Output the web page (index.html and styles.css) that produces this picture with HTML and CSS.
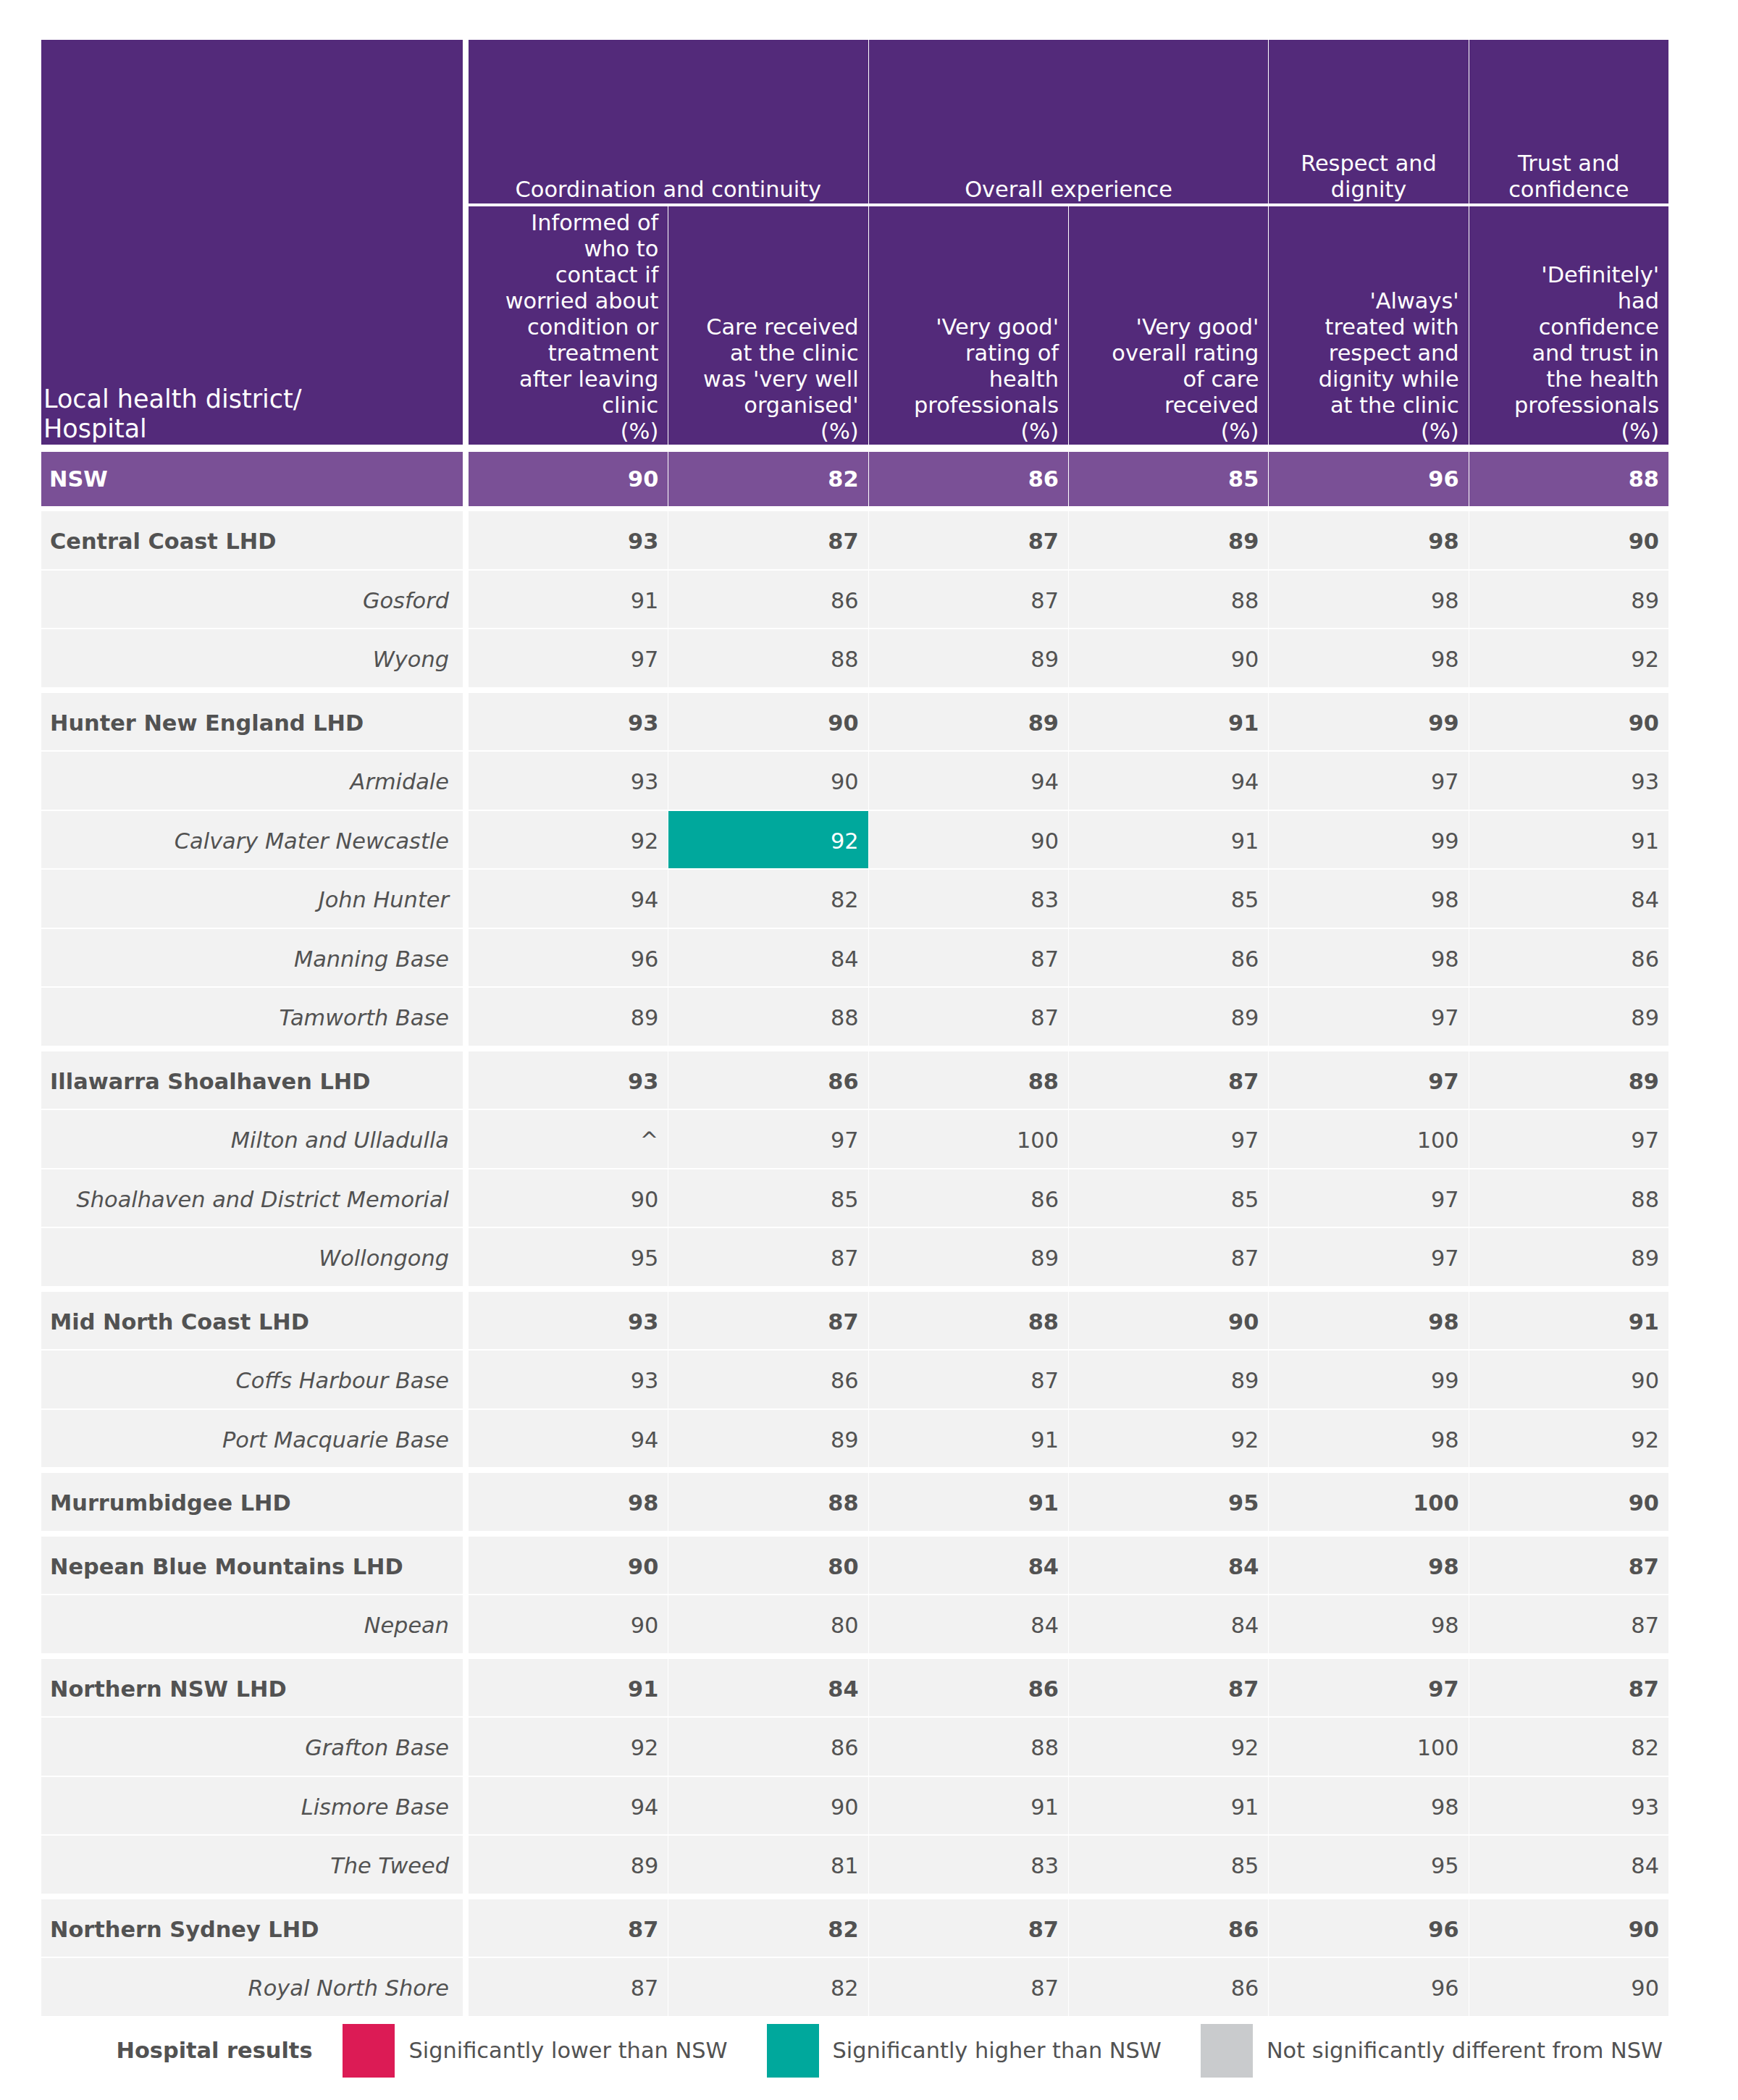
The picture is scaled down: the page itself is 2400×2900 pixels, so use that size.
FILE: index.html
```html
<!DOCTYPE html>
<html lang="en">
<head>
<meta charset="utf-8">
<title>Hospital results</title>
<link rel="stylesheet" href="styles.css">
</head>
<body>
<div class="page">
  <div class="table">
    <div class="head">
      <div class="corner">Local health district/<br>Hospital</div>
      <div class="hgrid">
        <div class="grp span2">Coordination and continuity</div>
        <div class="grp span2">Overall experience</div>
        <div class="grp">Respect and<br>dignity</div>
        <div class="grp">Trust and<br>confidence</div>
        <div class="sub">Informed of<br>who to<br>contact if<br>worried about<br>condition or<br>treatment<br>after leaving<br>clinic<br>(%)</div>
        <div class="sub">Care received<br>at the clinic<br>was 'very well<br>organised'<br>(%)</div>
        <div class="sub">'Very good'<br>rating of<br>health<br>professionals<br>(%)</div>
        <div class="sub">'Very good'<br>overall rating<br>of care<br>received<br>(%)</div>
        <div class="sub">'Always'<br>treated with<br>respect and<br>dignity while<br>at the clinic<br>(%)</div>
        <div class="sub">'Definitely'<br>had<br>confidence<br>and trust in<br>the health<br>professionals<br>(%)</div>
      </div>
    </div>

    <div class="row nsw">
      <div class="name">NSW</div>
      <div class="v">90</div><div class="v">82</div><div class="v">86</div><div class="v">85</div><div class="v">96</div><div class="v">88</div>
    </div>

    <div class="groups">
      <div class="group">
        <div class="row lhd"><div class="name">Central Coast LHD</div><div class="v">93</div><div class="v">87</div><div class="v">87</div><div class="v">89</div><div class="v">98</div><div class="v">90</div></div>
        <div class="row hosp"><div class="name">Gosford</div><div class="v">91</div><div class="v">86</div><div class="v">87</div><div class="v">88</div><div class="v">98</div><div class="v">89</div></div>
        <div class="row hosp"><div class="name">Wyong</div><div class="v">97</div><div class="v">88</div><div class="v">89</div><div class="v">90</div><div class="v">98</div><div class="v">92</div></div>
      </div>

      <div class="group">
        <div class="row lhd"><div class="name">Hunter New England LHD</div><div class="v">93</div><div class="v">90</div><div class="v">89</div><div class="v">91</div><div class="v">99</div><div class="v">90</div></div>
        <div class="row hosp"><div class="name">Armidale</div><div class="v">93</div><div class="v">90</div><div class="v">94</div><div class="v">94</div><div class="v">97</div><div class="v">93</div></div>
        <div class="row hosp"><div class="name">Calvary Mater Newcastle</div><div class="v">92</div><div class="v higher">92</div><div class="v">90</div><div class="v">91</div><div class="v">99</div><div class="v">91</div></div>
        <div class="row hosp"><div class="name">John Hunter</div><div class="v">94</div><div class="v">82</div><div class="v">83</div><div class="v">85</div><div class="v">98</div><div class="v">84</div></div>
        <div class="row hosp"><div class="name">Manning Base</div><div class="v">96</div><div class="v">84</div><div class="v">87</div><div class="v">86</div><div class="v">98</div><div class="v">86</div></div>
        <div class="row hosp"><div class="name">Tamworth Base</div><div class="v">89</div><div class="v">88</div><div class="v">87</div><div class="v">89</div><div class="v">97</div><div class="v">89</div></div>
      </div>

      <div class="group">
        <div class="row lhd"><div class="name">Illawarra Shoalhaven LHD</div><div class="v">93</div><div class="v">86</div><div class="v">88</div><div class="v">87</div><div class="v">97</div><div class="v">89</div></div>
        <div class="row hosp"><div class="name">Milton and Ulladulla</div><div class="v">^</div><div class="v">97</div><div class="v">100</div><div class="v">97</div><div class="v">100</div><div class="v">97</div></div>
        <div class="row hosp"><div class="name">Shoalhaven and District Memorial</div><div class="v">90</div><div class="v">85</div><div class="v">86</div><div class="v">85</div><div class="v">97</div><div class="v">88</div></div>
        <div class="row hosp"><div class="name">Wollongong</div><div class="v">95</div><div class="v">87</div><div class="v">89</div><div class="v">87</div><div class="v">97</div><div class="v">89</div></div>
      </div>

      <div class="group">
        <div class="row lhd"><div class="name">Mid North Coast LHD</div><div class="v">93</div><div class="v">87</div><div class="v">88</div><div class="v">90</div><div class="v">98</div><div class="v">91</div></div>
        <div class="row hosp"><div class="name">Coffs Harbour Base</div><div class="v">93</div><div class="v">86</div><div class="v">87</div><div class="v">89</div><div class="v">99</div><div class="v">90</div></div>
        <div class="row hosp"><div class="name">Port Macquarie Base</div><div class="v">94</div><div class="v">89</div><div class="v">91</div><div class="v">92</div><div class="v">98</div><div class="v">92</div></div>
      </div>

      <div class="group">
        <div class="row lhd"><div class="name">Murrumbidgee LHD</div><div class="v">98</div><div class="v">88</div><div class="v">91</div><div class="v">95</div><div class="v">100</div><div class="v">90</div></div>
      </div>

      <div class="group">
        <div class="row lhd"><div class="name">Nepean Blue Mountains LHD</div><div class="v">90</div><div class="v">80</div><div class="v">84</div><div class="v">84</div><div class="v">98</div><div class="v">87</div></div>
        <div class="row hosp"><div class="name">Nepean</div><div class="v">90</div><div class="v">80</div><div class="v">84</div><div class="v">84</div><div class="v">98</div><div class="v">87</div></div>
      </div>

      <div class="group">
        <div class="row lhd"><div class="name">Northern NSW LHD</div><div class="v">91</div><div class="v">84</div><div class="v">86</div><div class="v">87</div><div class="v">97</div><div class="v">87</div></div>
        <div class="row hosp"><div class="name">Grafton Base</div><div class="v">92</div><div class="v">86</div><div class="v">88</div><div class="v">92</div><div class="v">100</div><div class="v">82</div></div>
        <div class="row hosp"><div class="name">Lismore Base</div><div class="v">94</div><div class="v">90</div><div class="v">91</div><div class="v">91</div><div class="v">98</div><div class="v">93</div></div>
        <div class="row hosp"><div class="name">The Tweed</div><div class="v">89</div><div class="v">81</div><div class="v">83</div><div class="v">85</div><div class="v">95</div><div class="v">84</div></div>
      </div>

      <div class="group">
        <div class="row lhd"><div class="name">Northern Sydney LHD</div><div class="v">87</div><div class="v">82</div><div class="v">87</div><div class="v">86</div><div class="v">96</div><div class="v">90</div></div>
        <div class="row hosp"><div class="name">Royal North Shore</div><div class="v">87</div><div class="v">82</div><div class="v">87</div><div class="v">86</div><div class="v">96</div><div class="v">90</div></div>
      </div>
    </div>
  </div>

  <div class="legend">
    <span class="legend-title">Hospital results</span>
    <span class="item"><span class="swatch lower"></span><span class="label">Significantly lower than NSW</span></span>
    <span class="item"><span class="swatch higher-sw"></span><span class="label">Significantly higher than NSW</span></span>
    <span class="item"><span class="swatch same"></span><span class="label">Not significantly different from NSW</span></span>
  </div>
</div>
</body>
</html>
```

FILE: styles.css
```css
html, body {
  margin: 0;
  padding: 0;
  background: #ffffff;
}

body {
  font-family: "DejaVu Sans", Verdana, sans-serif;
  font-size: 30.4px;
  color: #525252;
}

.page {
  padding: 55px 0 0 57px;
  width: 2247px;
}

.table {
  display: flex;
  flex-direction: column;
}

/* ---------- header ---------- */
.head {
  display: flex;
  color: #ffffff;
  margin-bottom: 10px;
}

.corner {
  width: 582px;
  margin-right: 8px;
  flex: none;
  background: #532a7a;
  display: flex;
  align-items: flex-end;
  box-sizing: border-box;
  padding: 0 0 1px 3px;
  font-size: 35px;
  line-height: 41px;
}

.hgrid {
  flex: 1;
  display: grid;
  grid-template-columns: repeat(6, 1fr);
  grid-template-rows: 226px 329px;
  column-gap: 1px;
  row-gap: 4px;
  line-height: 36px;
}

.grp {
  background: #532a7a;
  display: flex;
  align-items: flex-end;
  justify-content: center;
  text-align: center;
  padding-bottom: 1px;
  white-space: nowrap;
}

.span2 {
  grid-column: span 2;
}

.sub {
  background: #532a7a;
  display: flex;
  align-items: flex-end;
  justify-content: flex-end;
  text-align: right;
  padding: 0 13px 0 0;
  white-space: nowrap;
}

/* ---------- body rows ---------- */
.row {
  display: grid;
  grid-template-columns: 589px repeat(6, 1fr);
  column-gap: 1px;
  height: 79.5px;
}

.row > div {
  display: flex;
  align-items: center;
  background: #f2f2f2;
  white-space: nowrap;
  box-sizing: border-box;
  padding-top: 4px;
}

.row .name {
  margin-right: 7px;
}

.row .v {
  justify-content: flex-end;
  padding-right: 13px;
}

.nsw {
  height: 75px;
  margin-bottom: 7px;
  color: #ffffff;
  font-weight: bold;
}

.nsw > div {
  background: #7a5096;
  padding-top: 0;
}

.nsw .name {
  padding-left: 11px;
}

.groups {
  display: flex;
  flex-direction: column;
  gap: 8px;
}

.group {
  display: flex;
  flex-direction: column;
  gap: 2px;
}

.lhd {
  font-weight: bold;
}

.lhd .name {
  padding-left: 12px;
}

.hosp .name {
  justify-content: flex-end;
  padding-right: 19px;
  font-style: italic;
}

.row > .higher {
  background: #00a89c;
  color: #ffffff;
}

/* ---------- legend ---------- */
.legend {
  display: flex;
  align-items: center;
  justify-content: flex-end;
  margin-top: 11px;
  padding-right: 8px;
  gap: 54px;
}

.legend-title {
  font-weight: bold;
  margin-right: -12px;
}

.item {
  display: flex;
  align-items: center;
  gap: 19px;
}

.swatch {
  display: block;
  width: 72px;
  height: 74px;
}

.lower {
  background: #dc1b55;
}

.higher-sw {
  background: #00a89c;
}

.same {
  background: #c9cbcd;
}
```
